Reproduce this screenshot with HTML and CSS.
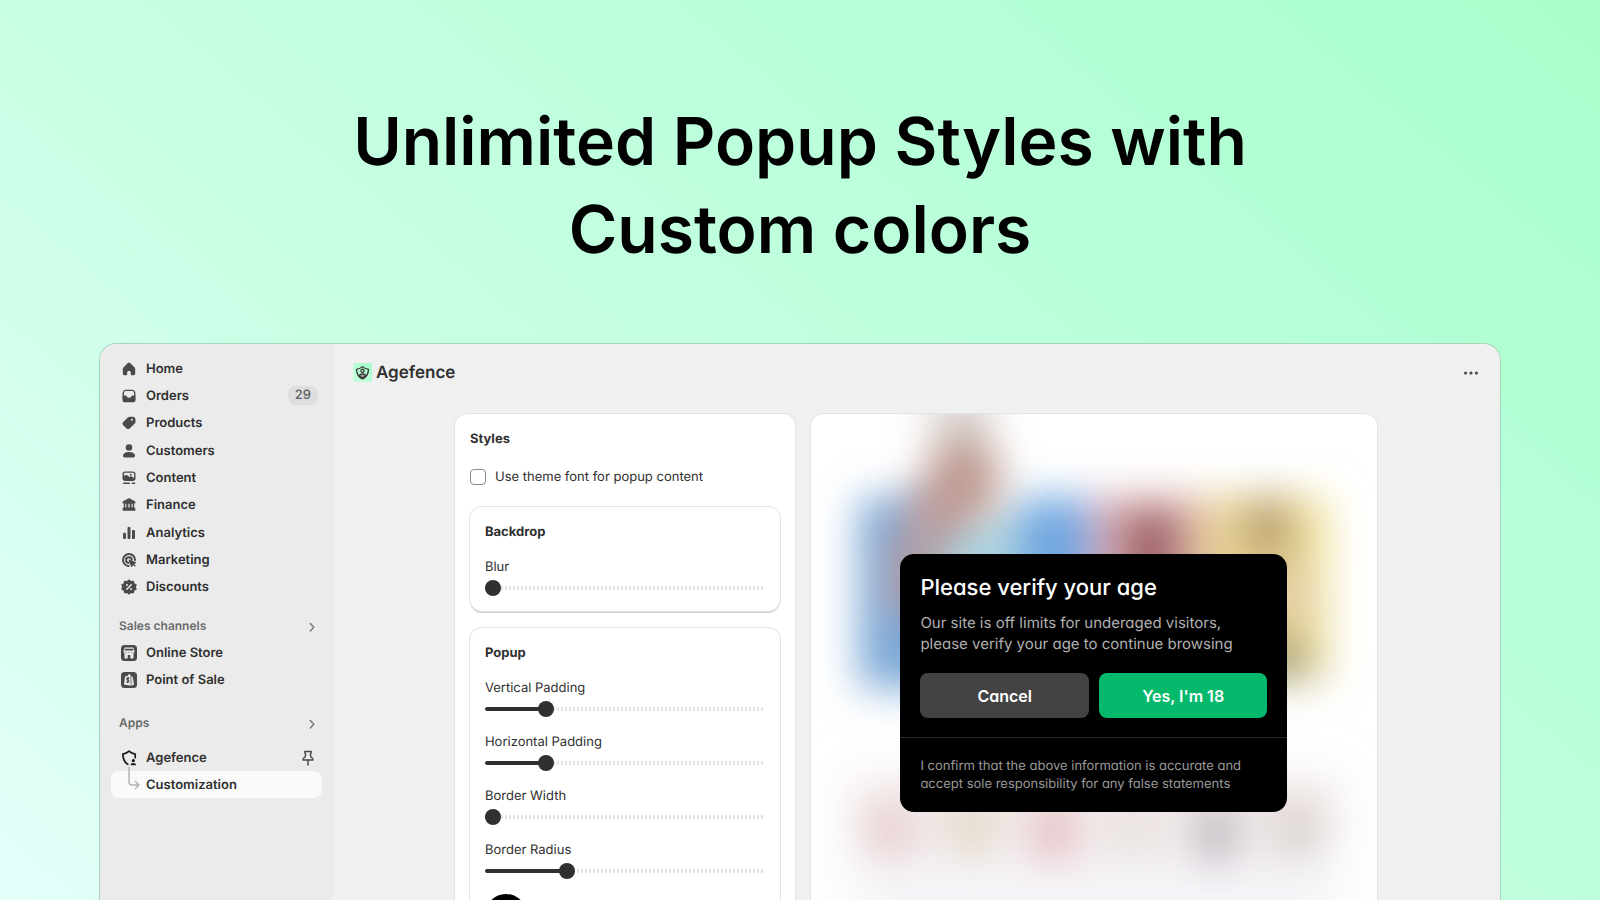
FILE: index.html
```html
<!DOCTYPE html>
<html lang="en">
<head>
<meta charset="utf-8">
<title>Agefence</title>
<link rel="stylesheet" href="styles.css">
</head>
<body>
<div class="page">
  <h1 class="headline">Unlimited Popup Styles with<br>Custom colors</h1>
  <div class="window">
    <nav class="sidebar" aria-label="Main">
      <ul class="nav nav-main">
        <li><a class="nav-link" href="#"><svg class="icon" viewBox="0 0 20 20"><path d="M8.6 4.3a2 2 0 0 1 2.8 0l4 3.9c.6.6.8 1.2.8 2v4.3c0 1-.7 1.7-1.7 1.7h-1.9c-.5 0-.8-.3-.8-.8v-1.9c0-1-.8-1.8-1.8-1.8s-1.800.8-1.800 1.800v1.900c0 .5-.3.8-.8.8H5.500c-1 0-1.700-.7-1.700-1.700V10.200c0-.8.3-1.400.8-2z"/></svg>Home</a></li>
        <li><a class="nav-link" href="#"><svg class="icon" viewBox="0 0 20 20"><path fill-rule="evenodd" d="M6.600 3.700h6.800a2.900 2.900 0 0 1 2.900 2.500l.3 3.500v3.700a2.900 2.900 0 0 1-2.900 2.900H6.300a2.900 2.900 0 0 1-2.900-2.900V9.700l.3-3.500a2.900 2.900 0 0 1 2.900-2.500zm0 1.300a1.500 1.500 0 0 0-1.500 1.300l-.3 3.300h1.700c.6 0 1 .3 1.300.8.400.8 1.200 1.300 2.200 1.300s1.800-.5 2.200-1.300c.3-.5.7-.8 1.300-.8h1.700l-.3-3.300A1.500 1.500 0 0 0 13.400 5z"/></svg>Orders<span class="badge">29</span></a></li>
        <li><a class="nav-link" href="#"><svg class="icon" viewBox="0 0 20 20"><path fill-rule="evenodd" d="M10.900 3.700h2.900c1.500 0 2.700 1.200 2.700 2.700v2.100c0 .9-.3 1.700-1 2.300l-4.800 4.800c-.9.9-2.300.9-3.200 0l-3.300-3.300c-.9-.9-.9-2.300 0-3.200l4.400-4.400c.6-.6 1.400-1 2.300-1zm2 4.100a1 1 0 1 0 0-2 1 1 0 0 0 0 2z"/></svg>Products</a></li>
        <li><a class="nav-link" href="#"><svg class="icon" viewBox="0 0 20 20"><circle cx="10" cy="6.500" r="3.300"/><path d="M4 14.700c0-2.300 2.900-3.700 6-3.700s6 1.400 6 3.700c0 1-.7 1.700-1.600 1.700H5.600c-.9 0-1.600-.7-1.600-1.700z"/></svg>Customers</a></li>
        <li><a class="nav-link" href="#"><svg class="icon" viewBox="0 0 20 20"><path fill-rule="evenodd" d="M6.200 3.500h7.600a2.700 2.700 0 0 1 2.700 2.700v4a2.700 2.700 0 0 1-2.700 2.700H6.200a2.700 2.700 0 0 1-2.700-2.700v-4a2.700 2.700 0 0 1 2.700-2.700zm.2 1.200c-.9 0-1.500.6-1.500 1.400v2l1.800-1c.7-.4 1.500-.2 2 .3l1.600 1.500 1-.5c.7-.3 1.500-.2 2 .4l1.800 1.500V6.100c0-.8-.6-1.400-1.400-1.400zm5.300 3a1 1 0 1 0 0-2 1 1 0 0 0 0 2z"/><rect x="4" y="14.500" width="7" height="1.500" rx=".7"/><rect x="12.500" y="14.500" width="3.800" height="1.500" rx=".7"/></svg>Content</a></li>
        <li><a class="nav-link" href="#"><svg class="icon" viewBox="0 0 20 20"><path fill-rule="evenodd" d="M9.200 3.500c.5-.3 1.100-.3 1.600 0l4.700 2.400c.7.400 1 .8 1 1.400 0 .8-.5 1.300-1.300 1.300v4c.8.300 1.300 1 1.300 1.900v.6c0 .4-.3.700-.7.700H4.200c-.4 0-.7-.3-.7-.7v-.6c0-.9.500-1.600 1.300-1.900v-4c-.8 0-1.300-.5-1.300-1.300 0-.6.3-1 1-1.400zM6.300 8.800v3.700h1.100V8.800zm3.100 0v3.700h1.200V8.800zm3.200 0v3.700h1.100V8.800z"/></svg>Finance</a></li>
        <li><a class="nav-link" href="#"><svg class="icon" viewBox="0 0 20 20"><rect x="4" y="9.700" width="3" height="6.300" rx="1"/><rect x="8.500" y="4" width="3" height="12" rx="1"/><rect x="13" y="7" width="3" height="9" rx="1"/></svg>Analytics</a></li>
        <li><a class="nav-link" href="#"><svg class="icon" viewBox="0 0 20 20"><g class="stroke stroke-bold"><path d="M16 10a6 6 0 1 0-6.300 6"/><path d="M12.800 9.700a2.900 2.900 0 1 0-3.300 3.200"/></g><path d="M10.200 9.600l6.400 2.500c.6.200.6 1 0 1.200l-1.500.8 1.700 1.700-1 1-1.700-1.700-.8 1.500c-.2.600-1 .6-1.200 0l-2.500-6.400c-.2-.4.200-.8.600-.6z"/></svg>Marketing</a></li>
        <li><a class="nav-link" href="#"><svg class="icon" viewBox="0 0 20 20"><path stroke="#4a4a4a" stroke-width="1.200" stroke-linejoin="round" d="M10 3l1.900 1.600 2.500-.300.500 2.400 2.200 1.200L16.200 10l.9 2.100-2.200 1.200-.5 2.400-2.500-.3L10 17l-1.900-1.600-2.500.3-.5-2.400-2.200-1.200.9-2.100-.9-2.100 2.200-1.200.5-2.400 2.500.3z"/><path class="cut" d="M7.800 12.200l4.400-4.400"/><circle class="hole" cx="8" cy="8" r="1"/><circle class="hole" cx="12" cy="12" r="1"/></svg>Discounts</a></li>
      </ul>
      <div class="section">
        <a class="section-link" href="#">Sales channels<svg class="chevron" viewBox="0 0 16 16"><path d="M6.300 4.500 9.800 8.300 6.300 12"/></svg></a>
        <ul class="nav">
          <li><a class="nav-link" href="#"><svg class="icon" viewBox="0 0 20 20"><rect x="2" y="2" width="16" height="16" rx="3.500"/><g class="light"><path fill-rule="evenodd" d="M5.900 4.500h8.200l1.300 3v1.300c0 .7-.4 1.200-.9 1.400v5.300h-3.200V12H8.700v3.500H5.500v-5.300c-.5-.2-.9-.7-.9-1.400V7.500zm.3 1.200-.7 1.700h9l-.7-1.700zm0 3.300a.7.700 0 0 0 1.400 0zm3.100 0a.7.700 0 0 0 1.400 0zm3.100 0a.7.700 0 0 0 1.400 0z"/></g></svg>Online Store</a></li>
          <li><a class="nav-link" href="#"><svg class="icon" viewBox="0 0 20 20"><rect x="2" y="2" width="16" height="16" rx="3.500"/><path class="light" d="M6 6.600 8.600 5.900c.3-1 1-1.600 1.700-1.600s1 .4 1.200 1l.3 10.500-6.800-1.200z"/><path class="light" d="M12.300 5.800l1.400 1.200 1.300 7.800-2.500.9z"/><path class="dollar" d="M10.200 8.300C8.800 7.600 7.800 8.200 7.900 9c.1 1 2 1.100 1.900 2.300-.1.900-1.300 1.200-2.400.5M9.300 7l-.8 6.200"/></svg>Point of Sale</a></li>
        </ul>
      </div>
      <div class="section section-apps">
        <a class="section-link" href="#">Apps<svg class="chevron" viewBox="0 0 16 16"><path d="M6.300 4.500 9.800 8.300 6.300 12"/></svg></a>
        <ul class="nav">
          <li><a class="nav-link" href="#"><svg class="icon" viewBox="0 0 20 20"><path class="shield" d="M8.800 16.300C5.300 14.300 4 11.300 3.800 6.100 6.200 5.900 8.200 4.900 10 3.200c1.800 1.700 3.800 2.700 6.200 2.900v3.600"/><g class="black"><circle cx="14.300" cy="12.700" r="1.600"/><path d="M11.600 17.300c0-1.600 1-2.300 2.700-2.300s2.700.7 2.700 2.300z"/></g></svg>Agefence<svg class="pin" viewBox="0 0 16 16"><path d="M4.800 1.500h6.400v1.300c-.9.800-.9 1.800-.6 2.900l.4 1.400c1.300.5 1.900 1.400 1.900 2.900H3.100c0-1.500.6-2.400 1.900-2.900l.4-1.400c.3-1.100.3-2.100-.6-2.900zM8 10v5"/></svg></a></li>
          <li><a class="nav-link current" href="#" aria-current="page"><svg class="branch" viewBox="0 0 20 27"><path d="M10 -3.500V11q0 3 3 3h7M16.500 10.500 20 14l-3.500 3.500"/></svg>Customization</a></li>
        </ul>
      </div>
    </nav>
    <main class="main">
      <header class="topbar">
        <svg class="logo" viewBox="0 0 20 20"><defs><linearGradient id="mint" x1="0" y1="1" x2="1" y2="0"><stop offset="0" stop-color="#c9ffe2"/><stop offset="1" stop-color="#a2fcc6"/></linearGradient></defs><rect width="20" height="20" rx="3" fill="url(#mint)"/><g class="logo-lines"><path d="M10 3.800c1.700 1.500 3.600 2.400 6.300 2.900-.1 4.700-2 8-6.300 10.200-4.300-2.200-6.200-5.500-6.300-10.200C6.400 6.200 8.300 5.300 10 3.800z"/><circle cx="10" cy="8.200" r="1.700"/><path fill="#999" d="M6.600 13.200c.4-1.400 1.600-1.800 3.400-1.800s3 .4 3.400 1.800L10 16.200z"/></g></svg>
        <h2 class="app-name">Agefence</h2>
        <button class="more" type="button" aria-label="More actions"><svg viewBox="0 0 16 16"><circle cx="2.600" cy="8" r="1.600"/><circle cx="8" cy="8" r="1.600"/><circle cx="13.400" cy="8" r="1.600"/></svg></button>
      </header>
      <div class="content">
        <section class="card">
          <h3 class="title">Styles</h3>
          <label class="check"><input type="checkbox">Use theme font for popup content</label>
          <div class="groups">
            <section class="group">
              <h4 class="title">Backdrop</h4>
              <div class="field"><label for="blur">Blur</label><input id="blur" type="range" value="0" style="--value:0"></div>
            </section>
            <section class="group">
              <h4 class="title">Popup</h4>
              <div class="field"><label for="vpad">Vertical Padding</label><input id="vpad" type="range" value="20" style="--value:20"></div>
              <div class="field"><label for="hpad">Horizontal Padding</label><input id="hpad" type="range" value="20" style="--value:20"></div>
              <div class="field"><label for="bwidth">Border Width</label><input id="bwidth" type="range" value="0" style="--value:0"></div>
              <div class="field"><label for="bradius">Border Radius</label><input id="bradius" type="range" value="28" style="--value:28"></div>
              <button class="swatch" type="button" aria-label="Background color"></button>
            </section>
          </div>
        </section>
        <section class="preview">
          <svg class="backdrop" viewBox="0 0 566 486" preserveAspectRatio="xMidYMin slice" aria-hidden="true">
            <defs>
              <filter id="soft" x="-60%" y="-60%" width="220%" height="220%"><feGaussianBlur stdDeviation="20"/></filter>
              <filter id="wide" x="-50%" y="-50%" width="200%" height="200%"><feGaussianBlur stdDeviation="26"/></filter>
            </defs>
            <g filter="url(#wide)">
              <rect x="40" y="365" width="486" height="75" fill="#f1e7e7"/>
              <rect x="40" y="430" width="486" height="100" fill="#f5f4f8"/>
            </g>
            <g filter="url(#soft)">
              <rect x="48" y="84" width="90" height="190" fill="#7aa7d6"/>
              <rect x="80" y="120" width="60" height="80" fill="#b39a98"/>
              <rect x="130" y="98" width="84" height="160" fill="#add6e2"/>
              <rect x="206" y="84" width="76" height="180" fill="#6ea6e0"/>
              <rect x="284" y="84" width="108" height="180" fill="#dcaaaa"/>
              <rect x="312" y="94" width="56" height="176" fill="#9c6068"/>
              <rect x="390" y="82" width="126" height="184" fill="#e8d496"/>
              <rect x="434" y="84" width="44" height="60" fill="#b59a68"/>
              <rect x="470" y="150" width="40" height="60" fill="#dcc3a8"/>
              <rect x="440" y="225" width="56" height="40" fill="#98956a"/>
              <rect x="496" y="82" width="22" height="160" fill="#f2e5a0"/>
            </g>
            <g filter="url(#soft)">
              <rect x="120" y="-20" width="60" height="44" fill="#d8d1cd"/>
              <ellipse cx="152" cy="66" rx="38" ry="46" fill="#bd9a90"/>
              <ellipse cx="120" cy="104" rx="26" ry="34" fill="#bc9897"/>
            </g>
            <g filter="url(#soft)">
              <rect x="60" y="392" width="38" height="48" fill="#e5c8c8"/>
              <rect x="142" y="390" width="38" height="48" fill="#e0d4be"/>
              <rect x="224" y="392" width="38" height="52" fill="#e3b8bc"/>
              <rect x="304" y="392" width="38" height="46" fill="#e4ded8"/>
              <rect x="386" y="392" width="38" height="54" fill="#bbb4bc"/>
              <rect x="466" y="390" width="38" height="50" fill="#d3cdc8"/>
            </g>
          </svg>
          <div class="popup" role="dialog" aria-labelledby="popup-title">
            <div class="popup-body">
              <h3 class="popup-title" id="popup-title">Please verify your age</h3>
              <p class="popup-text">Our site is off limits for underaged visitors,<br>please verify your age to continue browsing</p>
              <div class="popup-actions">
                <button class="btn" type="button">Cancel</button>
                <button class="btn btn-primary" type="button">Yes, I'm 18</button>
              </div>
            </div>
            <p class="popup-note">I confirm that the above information is accurate and<br>accept sole responsibility for any false statements</p>
          </div>
        </section>
      </div>
    </main>
  </div>
</div>
</body>
</html>
```
FILE: styles.css
```css
* { box-sizing: border-box; }
body, h1, h2, h3, h4, p, ul { margin: 0; padding: 0; }
ul { list-style: none; }
a { color: inherit; text-decoration: none; }
button, input { font: inherit; margin: 0; }

body {
  font-family: Inter, "Liberation Sans", sans-serif;
  font-size: 13px;
  line-height: 20px;
  color: #303030;
  text-rendering: geometricPrecision;
}
.page {
  height: 100vh;
  display: flex;
  flex-direction: column;
  overflow: hidden;
  background: linear-gradient(40deg, #e4fffa 0%, #caffe5 38%, #bcffdc 62%, #a8ffcb 100%);
}
.headline {
  padding: 97px 24px 70px;
  font-size: 66px;
  line-height: 88px;
  font-weight: 600;
  text-align: center;
  color: #000;
}
.window {
  flex: 1;
  min-height: 0;
  display: flex;
  margin: 0 99px;
  border: 1px solid #a3d6bc;
  border-bottom: 0;
  border-radius: 17px 17px 0 0;
  background: #f0f0f0;
  overflow: hidden;
}

/* Sidebar */
.sidebar {
  flex: none;
  width: 233px;
  padding: 11px 11px 0;
  background: #ebebeb;
}
.nav { display: grid; grid-auto-rows: 27px; }
.nav-main { min-height: 246px; grid-auto-rows: 1fr; }
.nav-link {
  display: flex;
  align-items: center;
  gap: 7px;
  height: 27px;
  padding: 0 4px 0 8px;
  border-radius: 8px;
  font-weight: 580;
}
.icon { flex: none; width: 20px; height: 20px; fill: #4a4a4a; }
.stroke { fill: none; stroke: #4a4a4a; }
.stroke-bold { stroke-width: 2; stroke-linecap: round; }
.cut { stroke: #ebebeb; stroke-width: 1.4; stroke-linecap: round; }
.hole { fill: #ebebeb; }
.light { fill: #ebebeb; }
.dollar { fill: none; stroke: #4a4a4a; stroke-width: 1.3; }
.shield { fill: none; stroke: #1a1a1a; stroke-width: 1.7; stroke-linecap: round; stroke-linejoin: round; }
.black { fill: #1a1a1a; }
.badge {
  margin-left: auto;
  padding: 0 7px;
  border-radius: 8px;
  background: #dedede;
  color: #616161;
  line-height: 19px;
  font-weight: 500;
}
.section { margin-top: 11px; }
.section-apps { margin-top: 16px; }
.section-apps .nav { margin-top: 8px; }
.section-link {
  display: flex;
  align-items: center;
  justify-content: space-between;
  height: 27px;
  padding: 0 2px 0 8px;
  font-size: 12px;
  font-weight: 600;
  color: #6b6b6b;
}
.chevron { width: 16px; height: 16px; margin-top: 3px; fill: none; stroke: #7a7a7a; stroke-width: 1.5; stroke-linecap: round; stroke-linejoin: round; }
.pin { width: 16px; height: 16px; margin: 0 2px 0 auto; fill: none; stroke: #4a4a4a; stroke-width: 1.5; stroke-linecap: round; stroke-linejoin: round; }
.current { background: #fafafa; }
.branch { flex: none; width: 20px; height: 27px; overflow: visible; fill: none; stroke: #b5b5b5; stroke-width: 1.5; stroke-linecap: round; stroke-linejoin: round; }

/* Main area */
.main { flex: 1; min-width: 0; }
.topbar {
  display: flex;
  align-items: center;
  gap: 4px;
  height: 54px;
  padding: 4px 19px 0 20px;
  border-bottom: 1px solid #ebebeb;
}
.logo { width: 19px; height: 19px; }
.logo-lines { fill: none; stroke: #333; stroke-width: 1.3; stroke-linejoin: round; }
.app-name { font-size: 17px; line-height: 24px; font-weight: 600; }
.more {
  width: 20px;
  height: 20px;
  margin-left: auto;
  padding: 2px;
  border: 0;
  background: none;
  fill: #4a4a4a;
}
.more svg { display: block; width: 16px; height: 16px; }
.content {
  display: grid;
  grid-template-columns: 3fr 5fr;
  gap: 16px;
  width: 79.1%;
  margin: 0 auto;
  padding: 16px 1px 0 0;
}
.card, .preview {
  border-radius: 12px;
  background: #fff;
  box-shadow: 0 0 0 1px #e3e3e3;
}
.card { padding: 15px; }
.title { font-size: 13px; line-height: 20px; font-weight: 650; }
.check {
  display: flex;
  align-items: center;
  gap: 9px;
  margin: 18px 0 20px;
}
.check input {
  appearance: none;
  width: 16px;
  height: 16px;
  border: 1px solid #8a8a8a;
  border-radius: 4px;
  background: #fff;
}
.groups { display: grid; gap: 17px; }
.group {
  display: grid;
  gap: 15px;
  padding: 15px;
  border-radius: 12px;
  box-shadow: 0 0 0 1px #e3e3e3, 0 2px 0 0 #cccccc;
}
.field { display: grid; gap: 3px; }
.field input {
  --fill: calc(8px + (100% - 16px) * var(--value) / 100);
  appearance: none;
  display: block;
  width: 100%;
  height: 16px;
  background: none;
}
.field input::-webkit-slider-runnable-track {
  height: 4px;
  border-radius: 2px;
  background:
    linear-gradient(#303030, #303030) 0 0 / var(--fill) 100% no-repeat,
    repeating-linear-gradient(to right, #e3e3e3 0 2px, #fff 2px 4px);
}
.field input::-webkit-slider-thumb {
  appearance: none;
  width: 16px;
  height: 16px;
  margin-top: -6px;
  border-radius: 50%;
  background: #303030;
}
.swatch {
  width: 42px;
  height: 42px;
  padding: 0;
  border: 0;
  border-radius: 50%;
  background: #000;
}

/* Preview */
.preview {
  position: relative;
  min-height: 540px;
  overflow: hidden;
  padding: 140px 0 0;
}
.backdrop { position: absolute; inset: 0; width: 100%; height: 486px; }
.popup {
  position: relative;
  width: 387px;
  max-width: 100%;
  margin: 0 auto;
  border-radius: 14px;
  background: #000;
  color: #fff;
  font-feature-settings: "cv11";
}
.popup-body { padding: 20px 20px 19px; }
.popup-title { font-size: 22px; line-height: 28px; font-weight: 500; }
.popup-text { margin-top: 10px; font-size: 15px; line-height: 21px; color: #b0b0b0; }
.popup-actions { display: grid; grid-template-columns: 1fr 1fr; gap: 10px; margin-top: 19px; }
.btn {
  height: 45px;
  border: 0;
  border-radius: 8px;
  background: #434343;
  color: #fff;
  font-size: 16px;
  font-weight: 600;
  font-feature-settings: inherit;
}
.btn-primary { background: #04b86c; }
.popup-note {
  padding: 19px 20px;
  border-top: 1px solid #2b2b2b;
  font-size: 13px;
  line-height: 18px;
  color: #9a9a9a;
}
```
